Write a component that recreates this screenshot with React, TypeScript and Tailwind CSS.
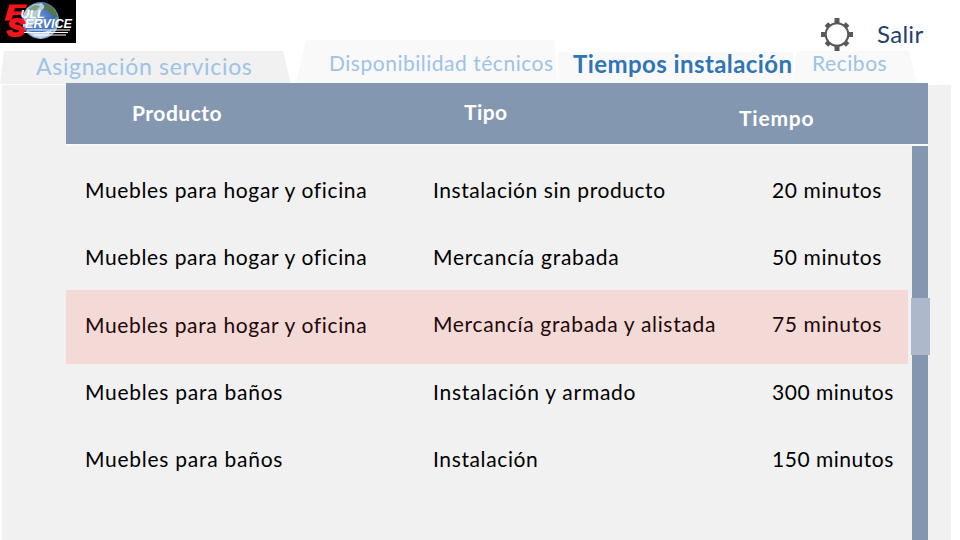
const rows = [
  { product: 'Muebles para hogar y oficina', type: 'Instalación sin producto', time: '20 minutos', frame: 'h-[66px] pt-[21px]', first: 'tracking-[0.66px]', second: 'tracking-[0.57px]', third: 'tracking-[0.6px]' },
  { product: 'Muebles para hogar y oficina', type: 'Mercancía grabada', time: '50 minutos', frame: 'h-[67px] pt-[22px]', first: 'tracking-[0.66px]', second: 'tracking-[0.75px]', third: 'tracking-[0.6px]' },
  { product: 'Muebles para hogar y oficina', type: 'Mercancía grabada y alistada', time: '75 minutos', frame: 'h-[74px] pt-[22px] bg-[#f4dad7] text-[#220808]', first: 'pt-px tracking-[0.66px]', second: 'tracking-[0.68px]', third: 'tracking-[0.6px]' },
  { product: 'Muebles para baños', type: 'Instalación y armado', time: '300 minutos', frame: 'h-[67px] pt-[16px]', first: 'tracking-[0.74px]', second: 'tracking-[0.73px]', third: 'tracking-[0.52px]' },
  { product: 'Muebles para baños', type: 'Instalación', time: '150 minutos', frame: 'h-[67px] pt-[16px]', first: 'tracking-[0.74px]', second: 'tracking-[0.62px]', third: 'tracking-[0.52px]' },
];

function Logo() {
  return (
    <svg width="76" height="43" viewBox="0 0 76 43" className="block shrink-0">
      <defs>
        <radialGradient id="sea" cx="45%" cy="45%" r="60%">
          <stop offset="0" stopColor="#6f9ad6" />
          <stop offset="0.7" stopColor="#3c68b4" />
          <stop offset="1" stopColor="#a9c4e4" />
        </radialGradient>
      </defs>
      <rect width="76" height="43" fill="#000" />
      <circle cx="40.500" cy="20.500" r="18.500" fill="url(#sea)" />
      <path d="M23 15l4-7 7-4 8-1 3 4-4 4-3 5-6 2-8 2z" fill="#b4cbd0" />
      <path d="M29 8l6-3 5 1-3 4-6 2z" fill="#7fa183" />
      <path d="M45 4l6 2 5 6 2 6-5-2-4-5-5-2z" fill="#54783f" />
      <path d="M26 31l12 2 14-3-4 6-7 2.500-8-2z" fill="#c3d6ea" />
      <path d="M23 21l11-4 6 3-9 6-8 1z" fill="#b9cfe6" />
      <g fontFamily="Liberation Sans, sans-serif" fontWeight="700" fontStyle="italic">
        <text x="5" y="20" fontSize="22" textLength="20" lengthAdjust="spacingAndGlyphs" fill="#f5141b" stroke="#f5141b" strokeWidth="1.200">F</text>
        <text x="7" y="36" fontSize="24" textLength="18" lengthAdjust="spacingAndGlyphs" fill="#f5141b" stroke="#f5141b" strokeWidth="1.800">S</text>
        <text x="20.500" y="17.500" fontSize="11.500" textLength="24" lengthAdjust="spacingAndGlyphs" fill="#fff">ULL</text>
        <text x="25" y="27.500" fontSize="13" textLength="47" lengthAdjust="spacingAndGlyphs" fill="#fff">ERVICE</text>
      </g>
      <path d="M27 30H70M24 32.500H68M34 35H66" stroke="#fff" strokeWidth="1" />
    </svg>
  );
}

function Gear() {
  return (
    <svg width="32" height="33" viewBox="-16 -16.500 32 33" className="block">
      <g fill="#595959">
        <rect x="-2.500" y="-16.500" width="5" height="33" />
        <rect x="-16" y="-2.500" width="32" height="5" />
        <rect x="-2.500" y="-15" width="5" height="30" transform="rotate(45)" />
        <rect x="-2.500" y="-15" width="5" height="30" transform="rotate(-45)" />
      </g>
      <circle r="11.300" fill="#fff" stroke="#595959" strokeWidth="2" />
    </svg>
  );
}

export default function App() {
  return (
    <div className="h-[540px] w-[960px] overflow-hidden bg-white font-['Lato',sans-serif] whitespace-nowrap">
      <header className="flex h-[83px] text-[#9dc3e6]">
        <div className="flex w-[296px] shrink-0 flex-col gap-2">
          <Logo />
          <div className="h-[33px] w-[291px] shrink-0 bg-[#f1f1f1] pl-9 text-[23px] leading-[31px] tracking-[0.68px] [clip-path:polygon(4px_0,283px_0,100%_100%,0_100%)]">
            Asignación servicios
          </div>
        </div>
        <div className="mt-10 w-[262px] shrink-0 bg-[#f9f9f9] pl-[33px] text-[21px] leading-[46px] tracking-[0.52px] [clip-path:polygon(10px_0,258px_0,100%_100%,0_100%)]">
          Disponibilidad técnicos
        </div>
        <div className="mt-[52px] w-[235px] shrink-0 bg-[#f9f9f9] pl-[15px] text-[24px] leading-[24px] font-bold tracking-[0.42px] text-[#2e75b6]">
          Tiempos instalación
        </div>
        <div className="flex flex-1 flex-col">
          <div className="flex h-[51px] shrink-0 items-end gap-6 pl-7">
            <Gear />
            <span className="text-[24px] leading-[34px] tracking-[0.3px] text-[#1f3f6e]">Salir</span>
          </div>
          <div className="h-8 w-[124px] bg-[#f9f9f9] pl-[19px] text-[21px] leading-[24px] tracking-[0.55px] [clip-path:polygon(4px_0,116px_0,100%_100%,0_100%)]">
            Recibos
          </div>
        </div>
      </header>

      <main className="relative mt-[2px] ml-[2px] flow-root h-[455px] w-[949px] bg-[#f1f1f1] pl-16">
        <section className="-mt-[2px] w-[864px]">
          <div className="flex h-[61px] w-[862px] bg-[#8497b0] text-[21px] leading-6 font-bold text-white">
            <div className="w-[398px] pt-[18px] pl-[66px] tracking-[0.5px]">Producto</div>
            <div className="w-[275px] pt-[17px] tracking-[0.4px]">Tipo</div>
            <div className="pt-[23px] tracking-[0.8px]">Tiempo</div>
          </div>
          <div className="h-[2px] w-[862px] bg-[#f9f9f9]" />
          <div className="flex justify-between">
            <div className="w-[842px] pt-[11px] text-[21px] leading-6 text-black">
              {rows.map((row, i) => (
                <div key={i} className={`flex pl-[19px] ${row.frame}`}>
                  <div className={`w-[348px] ${row.first}`}>{row.product}</div>
                  <div className={`w-[339px] ${row.second}`}>{row.type}</div>
                  <div className={row.third}>{row.time}</div>
                </div>
              ))}
            </div>
            <div className="flex h-[394px] w-[19px] flex-col bg-[#f1f1f1]">
              <div className="ml-px h-[152px] w-4 bg-[#8497b0]" />
              <div className="h-[57px] bg-[#adb9ca]" />
              <div className="ml-px w-4 flex-1 bg-[#8497b0]" />
            </div>
          </div>
        </section>
      </main>
    </div>
  );
}
